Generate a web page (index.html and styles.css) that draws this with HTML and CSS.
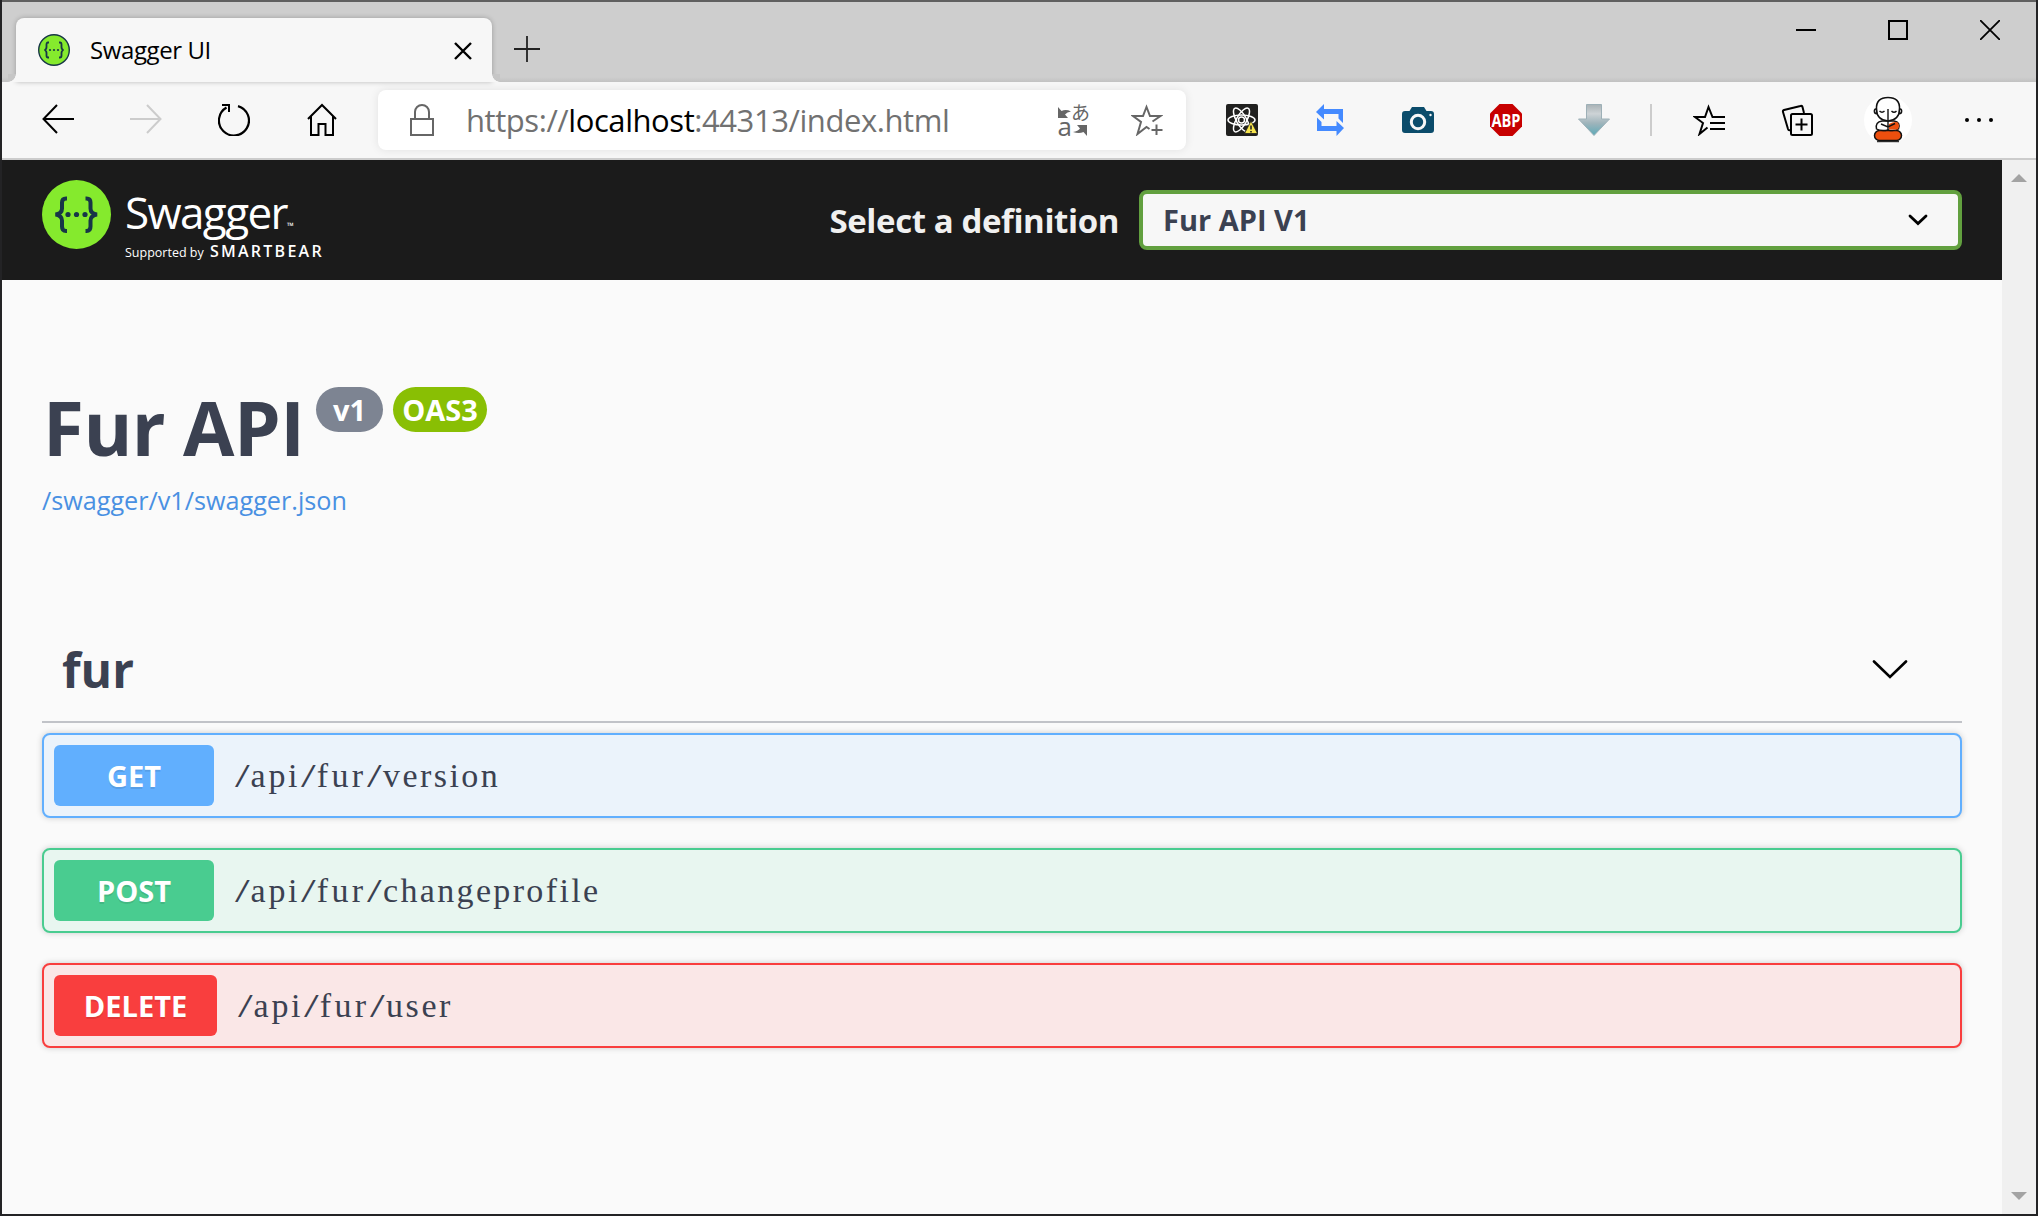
FILE: index.html
```html
<!DOCTYPE html>
<html lang="en">
<head>
<meta charset="utf-8">
<title>Swagger UI</title>
<link rel="stylesheet" href="styles.css">
</head>
<body>
<div class="window">
  <div class="titlebar">
    <div class="tab">
      <svg class="favicon" width="32" height="32" viewBox="0 0 32 32"><circle cx="16" cy="16" r="15.3" fill="#85ea2d" stroke="#173647" stroke-width="1.4"/><g fill="none" stroke="#173647" stroke-width="1.8"><path d="M11 8.5H10q-1.500 0-1.500 2V13q0 2.500-2 3q2 .5 2 3V21.500q0 2 1.500 2H11M21 8.500H22q1.500 0 1.500 2V13q0 2.500 2 3q-2 .5-2 3V21.500q0 2-1.500 2H21"/></g><g fill="#173647"><circle cx="12" cy="16" r="1.100"/><circle cx="16" cy="16" r="1.100"/><circle cx="20" cy="16" r="1.100"/></g></svg>
      <span class="tab-title">Swagger UI</span>
      <svg class="tab-close" width="18" height="18" viewBox="0 0 18 18"><path d="M1 1L17 17M17 1L1 17" stroke="#000" stroke-width="2.4"/></svg>
    </div>
    <svg class="new-tab" width="26" height="26" viewBox="0 0 26 26"><path d="M13 0V26M0 13H26" stroke="#222" stroke-width="1.800"/></svg>
    <div class="window-buttons">
      <svg width="20" height="20" viewBox="0 0 20 20"><path d="M0 10H20" stroke="#000" stroke-width="2"/></svg>
      <svg width="20" height="20" viewBox="0 0 20 20"><rect x="1" y="1" width="18" height="18" fill="none" stroke="#000" stroke-width="2"/></svg>
      <svg width="20" height="20" viewBox="0 0 20 20"><path d="M0 0L20 20M20 0L0 20" stroke="#000" stroke-width="1.800"/></svg>
    </div>
  </div>

  <div class="toolbar">
    <div class="slot"><svg width="32" height="32" viewBox="0 0 32 32"><path d="M32 15H1.500M15 1L1.500 15L15 29" fill="none" stroke="#000" stroke-width="2"/></svg></div>
    <div class="slot"><svg width="32" height="32" viewBox="0 0 32 32"><path d="M0 15H30.500M17 1L30.500 15L17 29" fill="none" stroke="#ccc" stroke-width="2"/></svg></div>
    <div class="slot"><svg width="32" height="32" viewBox="0 0 32 32"><path d="M20 2.100A15 15 0 1 1 8.500 3.500" fill="none" stroke="#000" stroke-width="2.200"/><path d="M4 1H11V8" fill="none" stroke="#000" stroke-width="2"/></svg></div>
    <div class="slot"><svg width="30" height="34" viewBox="0 0 30 34"><path d="M1 16L15 2L29 16M4 13.500V32H11.500V21H18.500V32H26V13.500" fill="none" stroke="#000" stroke-width="2"/></svg></div>
    <div class="address">
      <svg class="lock" width="24" height="32" viewBox="0 0 24 32"><path d="M1 15H23V31H1ZM5 15V8A7 7 0 0 1 19 8V15" fill="none" stroke="#666" stroke-width="2"/></svg>
      <span class="url">https://<span class="host">localhost</span>:44313/index.html</span>
      <svg class="translate" width="32" height="32" viewBox="0 0 32 32"><path d="M0 3V14H10L7 10.500Q9 8 13 7.500Q8 5 3.500 7ZM29 32V21H19L22 24.500Q20 27 15 28Q21 30 25.500 28Z" fill="#666"/><text x="13" y="16" class="glyph-ja">あ</text><text x="-.5" y="31.500" class="glyph-a">a</text></svg>
      <svg class="star" width="32" height="32" viewBox="0 0 32 32"><path d="M21.500 17.500L29.500 12H19L15.500 3L12 12H2L10 18L6.500 30L15.500 23L18.500 25M25.500 20.500V31M20.500 26H31.500" fill="none" stroke="#666" stroke-width="2"/></svg>
    </div>
    <div class="slot"><svg width="32" height="32" viewBox="0 0 32 32"><rect width="32" height="32" rx="2" fill="#20201f"/><g fill="none" stroke="#fff" stroke-width="1.500"><ellipse cx="15.500" cy="16" rx="13.500" ry="5"/><ellipse cx="15.500" cy="16" rx="13.500" ry="5" transform="rotate(60 15.500 16)"/><ellipse cx="15.500" cy="16" rx="13.500" ry="5" transform="rotate(120 15.500 16)"/></g><circle cx="15.500" cy="16" r="3" fill="none" stroke="#fff" stroke-width="1.500"/><path d="M25 17L31.500 29.500H18.500Z" fill="#f7e54d" stroke="#20201f" stroke-width=".8"/><path d="M25 21.500V25.500M25 27V28.500" stroke="#222" stroke-width="1.600"/></svg></div>
    <div class="slot"><svg width="28" height="32" viewBox="0 0 28 32"><path d="M0 8L8 0V5H27V19L22.500 14.500V10H8V15.500ZM28 24L20.500 32V27H1V13.500L5.500 18V22H20.500V17Z" fill="#448aff"/></svg></div>
    <div class="slot"><svg width="32" height="28" viewBox="0 0 32 28"><path d="M3 5H7.500L10 1H22L24.500 5H29Q32 5 32 8V24Q32 27 29 27H3Q0 27 0 24V8Q0 5 3 5Z" fill="#0b4c6b"/><circle cx="16" cy="16" r="6.700" fill="#0b4c6b" stroke="#f7f7f7" stroke-width="3"/><circle cx="28.500" cy="9" r="1.200" fill="#f7f7f7"/></svg></div>
    <div class="slot"><svg class="abp" width="32" height="32" viewBox="0 0 32 32"><path d="M9.500 0H22.500L32 9.500V22.500L22.500 32H9.500L0 22.500V9.500Z" fill="#c70000"/><text x="1.500" y="22.500" class="glyph-abp" textLength="29" lengthAdjust="spacingAndGlyphs">ABP</text></svg></div>
    <div class="slot"><svg width="32" height="32" viewBox="0 0 32 32"><defs><linearGradient id="steel" x1="0" y1="0" x2="0" y2="1"><stop offset="0" stop-color="#a9b2b6"/><stop offset=".3" stop-color="#cdd3d6"/><stop offset=".6" stop-color="#9fb4bb"/><stop offset="1" stop-color="#5daab8"/></linearGradient></defs><path d="M8.500 .5H23.500V15H31.500L16 31.500L.5 15H8.500Z" fill="url(#steel)" stroke="#9db0b7"/></svg></div>
    <div class="divider"></div>
    <div class="slot"><svg width="32" height="32" viewBox="0 0 32 32"><path d="M32 13H19.500L15.500 3L12 13H2L10 19L6.500 30L14.500 23.500M17 19H32M17 25H32" fill="none" stroke="#000" stroke-width="2"/></svg></div>
    <div class="slot"><svg width="32" height="32" viewBox="0 0 32 32"><g fill="none" stroke="#000" stroke-width="2"><rect x="10" y="10" width="21" height="21" rx="1.500"/><path d="M20.500 14.500V26.500M14.500 20.500H26.500M23 9L21.500 3Q21 1.500 19.500 2L3 6Q1.500 6.500 2 8L7 25Q7.500 26.500 9 26"/></g></svg></div>
    <div class="slot slot-avatar"><svg width="48" height="48" viewBox="0 0 48 48"><circle cx="24" cy="24" r="24" fill="#fff"/><path d="M13 45.500H35" stroke="#333" stroke-width="1.500"/><rect x="10.500" y="34.500" width="27" height="10" rx="5" fill="#ed4f0e" stroke="#111" stroke-width="1.500"/><path d="M12.500 33Q11 26 18 25H30Q37 26 34.500 33Q30 35.500 24 34Q17 35.500 12.500 33Z" fill="#fff" stroke="#111" stroke-width="1.400"/><path d="M25 28Q30 25 34 26.500Q36 31 33.500 33.500H25Z" fill="#ed4f0e"/><path d="M12 13Q10 13 10.500 16Q11 18 13 17.500M36 13Q38 13 37.500 16Q37 18 35 17.500" fill="none" stroke="#111" stroke-width="1.600"/><path d="M12.500 13Q12 1.500 24 1.500Q36 1.500 35.500 13Q35.500 24 24 25Q12.500 24 12.500 13Z" fill="#fff" stroke="#111" stroke-width="1.600"/><path d="M24 13V34M15.500 15Q18 17.500 20.500 15M27.500 15Q30 17.500 32.500 15M17 28L24 31L31 27.500" fill="none" stroke="#111" stroke-width="1.400"/></svg></div>
    <div class="slot"><svg width="30" height="6" viewBox="0 0 30 6"><circle cx="3" cy="3" r="2"/><circle cx="15" cy="3" r="2"/><circle cx="27" cy="3" r="2"/></svg></div>
  </div>

  <div class="viewport">
    <div class="page">
      <header class="topbar">
        <div class="logo">
          <svg width="70" height="70" viewBox="0 0 70 70"><circle cx="34.500" cy="35.500" r="34.500" fill="#85ea2d"/><g fill="none" stroke="#173647" stroke-width="4"><path d="M25 19.500H24Q20 19.500 20 23.500V29.500Q20 34.500 13.500 35.500Q20 36.500 20 41.500V47.500Q20 52 24 52H25M43.500 19.500H44.500Q48.500 19.500 48.500 23.500V29.500Q48.500 34.500 55 35.500Q48.500 36.500 48.500 41.500V47.500Q48.500 52 44.500 52H43.500"/></g><g fill="#173647"><circle cx="26" cy="35.500" r="2.600"/><circle cx="34.500" cy="35.500" r="2.600"/><circle cx="43" cy="35.500" r="2.600"/></g></svg>
          <div class="logo-text">
            <div class="logo-name">Swagger<span class="tm">™</span></div>
            <div class="logo-sub">Supported by <span class="smartbear">SMARTBEAR</span></div>
          </div>
        </div>
        <label class="definition">
          <span class="definition-label">Select a definition</span>
          <span class="select"><span class="select-value">Fur API V1</span>
            <svg width="20" height="12" viewBox="0 0 20 12"><path d="M2 2L10 9.500L18 2" fill="none" stroke="#000" stroke-width="2.800" stroke-linecap="round"/></svg>
          </span>
        </label>
      </header>
      <main class="content">
        <div class="heading">
          <h1>Fur API</h1>
          <span class="badge badge-version">v1</span>
          <span class="badge badge-oas">OAS3</span>
        </div>
        <a class="spec-link">/swagger/v1/swagger.json</a>
        <section>
          <div class="section-head">
            <h2>fur</h2>
            <svg width="36" height="20" viewBox="0 0 36 20"><path d="M2 1.500L18 17L34 1.500" fill="none" stroke="#000" stroke-width="2.600" stroke-linecap="round"/></svg>
          </div>
          <div class="op op-get"><span class="method">GET</span><span class="path"><span class="sep">/</span><span class="s-api">api</span><span class="sep">/</span><span class="s-fur">fur</span><span class="sep">/</span><span class="s-version">version</span></span></div>
          <div class="op op-post"><span class="method">POST</span><span class="path"><span class="sep">/</span><span class="s-api">api</span><span class="sep">/</span><span class="s-fur">fur</span><span class="sep">/</span><span class="s-change">changeprofile</span></span></div>
          <div class="op op-delete"><span class="method">DELETE</span><span class="path"><span class="sep">/</span><span class="s-api">api</span><span class="sep">/</span><span class="s-fur">fur</span><span class="sep">/</span><span class="s-user">user</span></span></div>
        </section>
      </main>
    </div>
    <div class="scrollbar">
      <svg width="16" height="8" viewBox="0 0 16 8"><path d="M8 0L16 8H0Z" fill="#a3a3a3"/></svg>
      <svg width="16" height="8" viewBox="0 0 16 8"><path d="M0 0H16L8 8Z" fill="#a3a3a3"/></svg>
    </div>
  </div>
</div>
</body>
</html>
```
FILE: styles.css
```css
* { box-sizing: border-box; }
body {
  margin: 0;
  height: 1216px;
  overflow: hidden;
  background: #232325;
  font-family: "Open Sans", "Noto Sans", sans-serif;
  color: #3b4151;
}
svg { display: block; flex: none; }
.window {
  display: flex;
  flex-direction: column;
  height: 1214px;
  margin: 0 2px;
  border-top: 2px solid #606060;
  background: #f7f7f7;
}

/* Browser chrome */
.titlebar {
  display: flex;
  height: 80px;
  flex: none;
  padding-left: 14px;
  background: linear-gradient(#cecece 75px, #c2c2c2 80px);
}
.tab {
  position: relative;
  display: flex;
  align-items: center;
  width: 476px;
  height: 64px;
  margin-top: 16px;
  padding: 0 20px 0 22px;
  border-radius: 8px 8px 0 0;
  background: #f7f7f7;
  box-shadow: 0 0 5px rgba(0, 0, 0, .25);
}
.tab::before, .tab::after {
  content: "";
  position: absolute;
  bottom: 0;
  width: 8px;
  height: 8px;
}
.tab::before { left: -8px; background: radial-gradient(circle at 0 0, #c6c6c6 7.500px, #f7f7f7 8px); }
.tab::after { right: -8px; background: radial-gradient(circle at 100% 0, #c6c6c6 7.500px, #f7f7f7 8px); }
.tab-title { flex: 1; margin-left: 20px; padding-bottom: 2px; font-size: 24px; letter-spacing: -.4px; color: #000; }
.tab-close { margin-top: 1px; }
.new-tab { margin: 34px 0 0 22px; }
.window-buttons { display: flex; gap: 72px; margin: 18px 36px 0 auto; }
.toolbar {
  display: flex;
  align-items: center;
  height: 78px;
  flex: none;
  padding-left: 12px;
  border-bottom: 2px solid #ccc;
}
.slot { display: flex; justify-content: center; width: 88px; flex: none; }
.slot-avatar { width: 94px; }
.divider { width: 2px; height: 32px; margin: 0 13px 0 12px; background: #ccc; }
.address {
  display: flex;
  align-items: center;
  width: 808px;
  height: 60px;
  margin: 0 12px;
  padding: 0 23px 0 32px;
  border-radius: 8px;
  background: #fff;
  box-shadow: 0 0 10px rgba(0, 0, 0, .09);
}
.url { flex: 1; margin-left: 32px; font-size: 31px; letter-spacing: -.43px; color: #717171; white-space: nowrap; }
.host { color: #000; }
.translate { margin-right: 41px; overflow: visible; }
.abp { overflow: visible; }
.glyph-ja { font: 19px "Noto Sans CJK JP", sans-serif; fill: #666; }
.glyph-a { font: 26px "Open Sans", sans-serif; fill: #666; }
.glyph-abp { font: bold 18px "Open Sans", sans-serif; fill: #fff; }

/* Page */
.viewport { display: flex; flex: 1; min-height: 0; background: #fafafa; }
.page { flex: 1; }
.scrollbar {
  display: flex;
  flex-direction: column;
  justify-content: space-between;
  align-items: center;
  width: 34px;
  padding: 14px 0;
  background: #f0f0f0;
}
.topbar {
  display: flex;
  justify-content: space-between;
  height: 120px;
  padding: 0 40px;
  background: #1b1b1b;
}
.logo { display: flex; padding-top: 19px; }
.logo-text { margin-left: 13px; color: #fff; white-space: nowrap; }
.logo-name { height: 60px; margin-top: 3px; font-size: 44px; line-height: 60px; letter-spacing: -1.600px; }
.tm { font-size: 9px; letter-spacing: 0; }
.logo-sub { height: 16px; font-size: 12.500px; line-height: 18px; }
.smartbear { margin-left: 3px; font-size: 16px; font-weight: 600; letter-spacing: 2.250px; }
.definition { display: flex; align-items: center; }
.definition-label { font-size: 33px; letter-spacing: -.4px; font-weight: 700; color: #f0f0f0; white-space: nowrap; }
.select {
  display: flex;
  align-items: center;
  justify-content: space-between;
  width: 823px;
  height: 60px;
  margin-left: 20px;
  padding: 0 30px 0 20px;
  border: 4px solid #62a03f;
  border-radius: 8px;
  background: #f7f7f7;
}
.select-value { padding-bottom: 1px; font-size: 29px; font-weight: 700; }
.content { padding: 0 40px; }
.heading { display: flex; padding-top: 107px; height: 200px; }
h1 { width: 262px; margin: -2px 0 0; font-size: 74.500px; line-height: 84px; font-weight: 700; letter-spacing: -.5px; word-spacing: -1px; white-space: nowrap; padding-left: 1px; }
.badge {
  height: 45px;
  border-radius: 23px;
  font-size: 29px;
  font-weight: 700;
  line-height: 46px;
  text-align: center;
  color: #fff;
}
.badge-version { width: 67px; margin-left: 12px; background: #7d8492; }
.badge-oas { width: 94px; margin-left: 10px; background: #89bf04; }
.spec-link { display: block; height: 40px; font-size: 25.200px; line-height: 40px; color: #4990e2; }
.section-head {
  display: flex;
  align-items: center;
  justify-content: space-between;
  height: 104px;
  margin: 99px 0 10px;
  padding: 0 54px 0 20px;
  border-bottom: 2px solid #c1c3c8;
}
h2 { margin: 0; font-size: 48px; line-height: 60px; font-weight: 700; }
.op {
  display: flex;
  align-items: center;
  height: 85px;
  margin-bottom: 30px;
  padding: 0 10px;
  border: 2px solid;
  border-radius: 8px;
  box-shadow: 0 0 6px rgba(0, 0, 0, .19);
}
.op-get { border-color: #61affe; background: #ebf3fb; }
.op-post { border-color: #49cc90; background: #e8f6f0; }
.op-delete { border-color: #f93e3e; background: #fae7e7; }
.method {
  width: 160px;
  height: 61px;
  border-radius: 6px;
  font-size: 29px;
  font-weight: 700;
  line-height: 62px;
  text-align: center;
  color: #fff;
  text-shadow: 0 2px 0 rgba(0, 0, 0, .1);
}
.op-get .method { background: #61affe; }
.op-post .method { background: #49cc90; }
.op-delete .method { width: 163px; background: #f93e3e; }
.path { display: flex; margin-left: 20px; font-family: "Liberation Serif", serif; font-size: 34px; }
.sep { width: 16.600px; text-align: center; transform: scaleX(1.550); }
.s-api { letter-spacing: 2.700px; }
.s-fur { letter-spacing: 3.300px; }
.s-version { letter-spacing: 2.450px; }
.s-change { letter-spacing: 2.350px; }
.s-user { letter-spacing: 2.600px; }
```
